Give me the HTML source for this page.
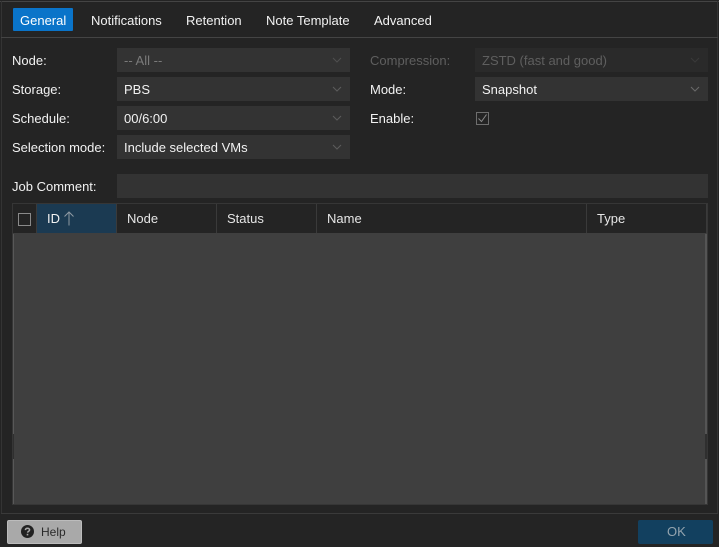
<!DOCTYPE html>
<html>
<head>
<meta charset="utf-8">
<style>
html,body{margin:0;padding:0;width:719px;height:547px;overflow:hidden;background:#242424;}
body{position:relative;font-family:"Liberation Sans",sans-serif;font-size:13px;color:#f2f2f2;}
.a{position:absolute;}
.t{position:absolute;line-height:16px;white-space:nowrap;}
.f{position:absolute;height:24px;background:#333;line-height:25px;box-sizing:border-box;padding-left:7px;white-space:nowrap;}
.f svg{position:absolute;right:8px;top:9px;}
.h{position:absolute;top:204px;height:29px;line-height:29px;white-space:nowrap;box-sizing:border-box;padding-left:10px;border-right:1px solid #3a3a3a;color:#e6e6e6;}
</style>
</head>
<body>
<!-- window borders -->
<div class="a" style="left:0;top:1px;width:719px;height:1px;background:#444"></div>
<div class="a" style="left:1px;top:1px;width:1px;height:513px;background:#343434"></div>
<div class="a" style="left:717px;top:1px;width:1px;height:513px;background:#343434"></div>
<div class="a" style="left:1px;top:37px;width:717px;height:1px;background:#444"></div>
<div class="a" style="left:1px;top:513px;width:717px;height:1px;background:#3a3a3a"></div>

<!-- tabs -->
<div class="a" style="left:13px;top:8px;width:60px;height:23px;background:#0a74c9;border-radius:1px"></div>
<div class="t" style="left:20px;top:13px;color:#fff">General</div>
<div class="t" style="left:91px;top:13px">Notifications</div>
<div class="t" style="left:186px;top:13px">Retention</div>
<div class="t" style="left:266px;top:13px">Note Template</div>
<div class="t" style="left:374px;top:13px">Advanced</div>

<!-- left column -->
<div class="t" style="left:12px;top:53px">Node:</div>
<div class="t" style="left:12px;top:82px">Storage:</div>
<div class="t" style="left:12px;top:111px">Schedule:</div>
<div class="t" style="left:12px;top:140px">Selection mode:</div>

<div class="f" style="left:117px;top:48px;width:233px;color:#7a7a7a">-- All --<svg width="10" height="7" viewBox="0 0 10 7"><path d="M1 1l4 4 4-4" fill="none" stroke="#4f4f4f" stroke-width="1.1"/></svg></div>
<div class="f" style="left:117px;top:77px;width:233px">PBS<svg width="10" height="7" viewBox="0 0 10 7"><path d="M1 1l4 4 4-4" fill="none" stroke="#5c5c5c" stroke-width="1.1"/></svg></div>
<div class="f" style="left:117px;top:106px;width:233px">00/6:00<svg width="10" height="7" viewBox="0 0 10 7"><path d="M1 1l4 4 4-4" fill="none" stroke="#5c5c5c" stroke-width="1.1"/></svg></div>
<div class="f" style="left:117px;top:135px;width:233px">Include selected VMs<svg width="10" height="7" viewBox="0 0 10 7"><path d="M1 1l4 4 4-4" fill="none" stroke="#5c5c5c" stroke-width="1.1"/></svg></div>

<!-- right column -->
<div class="t" style="left:370px;top:53px;color:#5f5f5f">Compression:</div>
<div class="t" style="left:370px;top:82px">Mode:</div>
<div class="t" style="left:370px;top:111px">Enable:</div>

<div class="f" style="left:475px;top:48px;width:233px;background:#2a2a2a;color:#5f5f5f">ZSTD (fast and good)<svg width="10" height="7" viewBox="0 0 10 7"><path d="M1 1l4 4 4-4" fill="none" stroke="#3a3a3a" stroke-width="1.1"/></svg></div>
<div class="f" style="left:475px;top:77px;width:233px">Snapshot<svg width="10" height="7" viewBox="0 0 10 7"><path d="M1 1l4 4 4-4" fill="none" stroke="#6a6a6a" stroke-width="1.1"/></svg></div>
<svg class="a" style="left:476px;top:112px" width="13" height="13" viewBox="0 0 13 13"><rect x="0.5" y="0.5" width="12" height="12" fill="none" stroke="#6e6e6e"/><path d="M2.5 6.5l3 3 5-7" fill="none" stroke="#8a8a8a" stroke-width="1"/></svg>

<!-- comment -->
<div class="t" style="left:12px;top:179px">Job Comment:</div>
<div class="f" style="left:117px;top:174px;width:591px"></div>

<!-- grid -->
<div class="a" style="left:12px;top:203px;width:696px;height:302px;background:#242424;box-sizing:border-box;border:1px solid #363636"></div>
<div class="a" style="left:13px;top:233px;width:694px;height:271px;background:#3f3f3f"></div>
<div class="a" style="left:13px;top:234px;width:1px;height:270px;background:#585858"></div>
<div class="a" style="left:705px;top:234px;width:2px;height:270px;background:#555"></div>
<div class="a" style="left:13px;top:434px;width:1px;height:25px;background:#2f2f2f"></div>
<div class="a" style="left:705px;top:434px;width:2px;height:25px;background:#2f2f2f"></div>

<div class="a" style="left:13px;top:204px;width:24px;height:29px;box-sizing:border-box;border-right:1px solid #3a3a3a"></div>
<div class="a" style="left:18px;top:213px;width:13px;height:13px;box-sizing:border-box;border:1px solid #8a8a8a"></div>
<div class="h" style="left:37px;width:80px;background:#1b3a52;color:#f2f2f2">ID</div>
<svg class="a" style="left:63px;top:211px" width="12" height="15" viewBox="0 0 12 15"><path d="M6 14.5V1M1.5 5.5L6 1l4.5 4.5" fill="none" stroke="#8f9aa3" stroke-width="1"/></svg>
<div class="h" style="left:117px;width:100px">Node</div>
<div class="h" style="left:217px;width:100px">Status</div>
<div class="h" style="left:317px;width:270px">Name</div>
<div class="h" style="left:587px;width:120px">Type</div>

<!-- footer -->
<div class="a" style="left:7px;top:520px;width:75px;height:24px;box-sizing:border-box;background:#a9a9a9;border:1px solid #bcbcbc;border-radius:2px"></div>
<svg class="a" style="left:21px;top:525px" width="13" height="13" viewBox="0 0 13 13"><circle cx="6.5" cy="6.5" r="6.5" fill="#222"/><path d="M4.4 5.1c0-1.2 1-1.9 2.1-1.9 1.2 0 2.1.7 2.1 1.7 0 1.5-2 1.4-2 2.7" fill="none" stroke="#a9a9a9" stroke-width="1.5"/><rect x="5.7" y="8.8" width="1.6" height="1.6" fill="#a9a9a9"/></svg>
<div class="t" style="left:41px;top:524px;color:#2a2a2a;font-size:12px">Help</div>
<div class="a" style="left:638px;top:520px;width:75px;height:24px;background:#12405f;border-radius:2px"></div>
<div class="t" style="left:667px;top:524px;color:#93a3ae">OK</div>
</body>
</html>
